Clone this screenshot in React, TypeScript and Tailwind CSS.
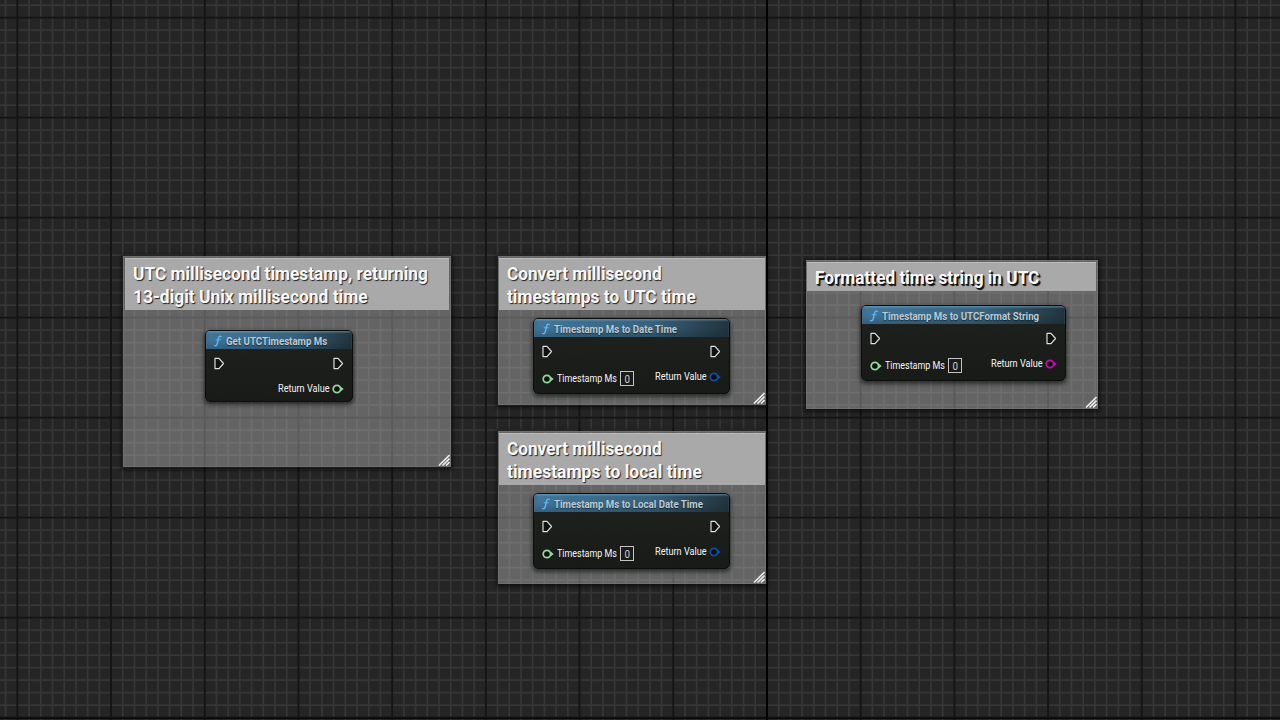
import type { ReactNode } from "react";

const minorX = Array.from({ length: 110 }, (_, i) => 17.35 + (i - 2) * 11.7125);
const minorY = Array.from({ length: 59 }, (_, i) => 17.6 + (i - 2) * 12.5);

function Grid() {
  return (
    <svg className="absolute inset-0" width="1280" height="720" viewBox="0 0 1280 720">
      <g stroke="#363636" strokeWidth="1.7">
        {minorX.map((x, i) => ((i - 2) % 8 === 0 ? null : <path key={i} d={`M${x} 0V720`} />))}
        {minorY.map((y, i) => ((i - 2) % 8 === 0 ? null : <path key={i} d={`M0 ${y}H1280`} />))}
      </g>
      <g stroke="#141414" strokeWidth="1.8">
        {minorX.map((x, i) => ((i - 2) % 8 === 0 ? <path key={i} d={`M${x} 0V720`} /> : null))}
        {minorY.map((y, i) => ((i - 2) % 8 === 0 ? <path key={i} d={`M0 ${y}H1280`} /> : null))}
      </g>
      <path d="M767 0V720" stroke="#000" strokeWidth="2" />
      <path d="M0 718.2H1280" stroke="#0c0809" strokeWidth="1.6" />
    </svg>
  );
}

function ExecPin() {
  return (
    <svg className="block shrink-0" width="11" height="13" viewBox="0 0 11 13" fill="#111" stroke="#dedede" strokeWidth="1.2" strokeLinejoin="round">
      <path d="M1 1.4H5L9.5 6.5L5 11.6H1Z" />
    </svg>
  );
}

function DataPin({ color }: { color: string }) {
  return (
    <svg className="block shrink-0" width="12" height="10" viewBox="0 0 12 10">
      <circle cx="4.9" cy="5" r="3.7" fill="#0c100d" stroke={color} strokeWidth="1.8" />
      <path d="M8.6 2.4L11.7 5L8.6 7.6Z" fill={color} />
    </svg>
  );
}

function FunctionIcon() {
  return (
    <svg className="mt-px block shrink-0" width="10" height="12" viewBox="0 0 10 12" fill="none" stroke="#62b4ee" strokeLinecap="round">
      <path d="M8.4 1.5C6.7 .6 5.9 1.6 5.5 3.3L4.3 8.5C3.9 10.3 3 11.4 1.5 10.5" strokeWidth="1.4" />
      <path d="M3.2 4.7H7.2" strokeWidth="1.1" />
    </svg>
  );
}

type NodeProps = {
  place: string;
  title: string;
  input?: boolean;
  output: string;
};

function GraphNode({ place, title, input, output }: NodeProps) {
  return (
    <section
      className={`absolute overflow-hidden rounded-[5px] border border-[#0b0d0d] bg-linear-to-b from-[#1b1e1b]/95 to-[#151815]/97 shadow-[0_2px_4px_1px_rgba(0,0,0,0.55)] ${place}`}
    >
      <header className="flex h-[18px] items-center bg-linear-to-r from-[#41769a] via-[#38627d] via-60% to-[#22343e] pl-[7px] shadow-[inset_0_1.5px_1.5px_rgba(120,175,205,0.5),inset_0_-5px_5px_rgba(12,26,36,0.22)]">
        <FunctionIcon />
        <span className="mt-[1px] ml-[3px] origin-left scale-x-[0.842] whitespace-nowrap text-[11.5px] leading-[18px] font-bold text-[#bccad2] [text-shadow:0_1px_1px_rgba(0,0,0,0.5)]">
          {title}
        </span>
      </header>
      <div className="flex justify-between pt-[8px] pr-[8px] pl-[8px]">
        <ExecPin />
        <ExecPin />
      </div>
      <div className="flex justify-between pr-[8px] pl-[8px] text-[10.5px] leading-[12px] text-[#f4f4f4]">
        {input ? (
          <div className="mt-[13px] flex h-[15px] items-center">
            <DataPin color="#91d69a" />
            <span className="ml-[3px] w-[60px] origin-left scale-x-[0.85] whitespace-nowrap">Timestamp Ms</span>
            <span className="ml-[3px] flex h-[15px] w-[14px] items-center justify-center border border-[#c4c4c4] text-[#d0d0d0]">
              <span className="scale-x-[0.85] text-[11.5px]">0</span>
            </span>
          </div>
        ) : (
          <span />
        )}
        <div className="mt-[12px] flex h-[13px] items-center">
          <span className="mr-[3px] w-[51px] origin-left scale-x-[0.87] whitespace-nowrap">Return Value</span>
          <DataPin color={output} />
        </div>
      </div>
    </section>
  );
}

function Comment({ place, header, children }: { place: string; header: string; children: ReactNode }) {
  return (
    <section className={`absolute border border-[#747474]/70 bg-[#bdbdbd]/42 pt-px shadow-[0_1px_4px_2px_rgba(0,0,0,0.55)] ${place}`}>
      <h2
        className={`border-t border-[#bcbcbc] bg-[#a9a9a9] pl-[8px] text-[18.5px] leading-[23px] font-bold whitespace-nowrap text-[#f8f8f8] ${header}`}
      >
        {children}
      </h2>
      <svg className="absolute right-0 bottom-0" width="12" height="12" viewBox="0 0 12 12" stroke="#ececec" strokeWidth="1.6">
        <path d="M1 11.5L11.5 1M4.5 11.5L11.5 4.5M8 11.5L11.5 8" />
      </svg>
    </section>
  );
}

const soft = "[text-shadow:1px_1px_1px_rgba(25,25,25,0.95)]";

export default function App() {
  return (
    <main className="relative h-[720px] w-[1280px] overflow-hidden bg-[#252525] font-['Roboto','Liberation_Sans',sans-serif]">
      <Grid />
      <Comment place="left-[123px] top-[256px] h-[211px] w-[328px]" header={`mx-px h-[52px] pt-[4px] ${soft}`}>
        <span className="block origin-left scale-x-[0.935]">UTC millisecond timestamp, returning</span>
        <span className="block origin-left scale-x-[0.941]">13-digit Unix millisecond time</span>
      </Comment>
      <Comment place="left-[498px] top-[256px] h-[149px] w-[268px]" header={`h-[52px] pt-[4px] ${soft}`}>
        <span className="block origin-left scale-x-[0.93]">Convert millisecond</span>
        <span className="block origin-left scale-x-[0.936]">timestamps to UTC time</span>
      </Comment>
      <Comment place="left-[498px] top-[431px] h-[153px] w-[268px]" header={`h-[52px] pt-[4px] ${soft}`}>
        <span className="block origin-left scale-x-[0.93]">Convert millisecond</span>
        <span className="block origin-left scale-x-[0.946]">timestamps to local time</span>
      </Comment>
      <Comment place="left-[806px] top-[260px] h-[149px] w-[292px]" header="mr-px h-[29px] pt-[4px] [text-shadow:1px_1px_0_#111,2px_2px_1px_#111]">
        <span className="block origin-left scale-x-[0.932]">Formatted time string in UTC</span>
      </Comment>

      <GraphNode place="left-[205px] top-[330px] h-[72px] w-[148px]" title="Get UTCTimestamp Ms" output="#91d69a" />
      <GraphNode place="left-[533px] top-[318px] h-[76px] w-[197px]" title="Timestamp Ms to Date Time" input output="#124ca5" />
      <GraphNode place="left-[533px] top-[493px] h-[76px] w-[197px]" title="Timestamp Ms to Local Date Time" input output="#124ca5" />
      <GraphNode place="left-[861px] top-[305px] h-[76px] w-[205px]" title="Timestamp Ms to UTCFormat String" input output="#c20bb0" />
    </main>
  );
}
